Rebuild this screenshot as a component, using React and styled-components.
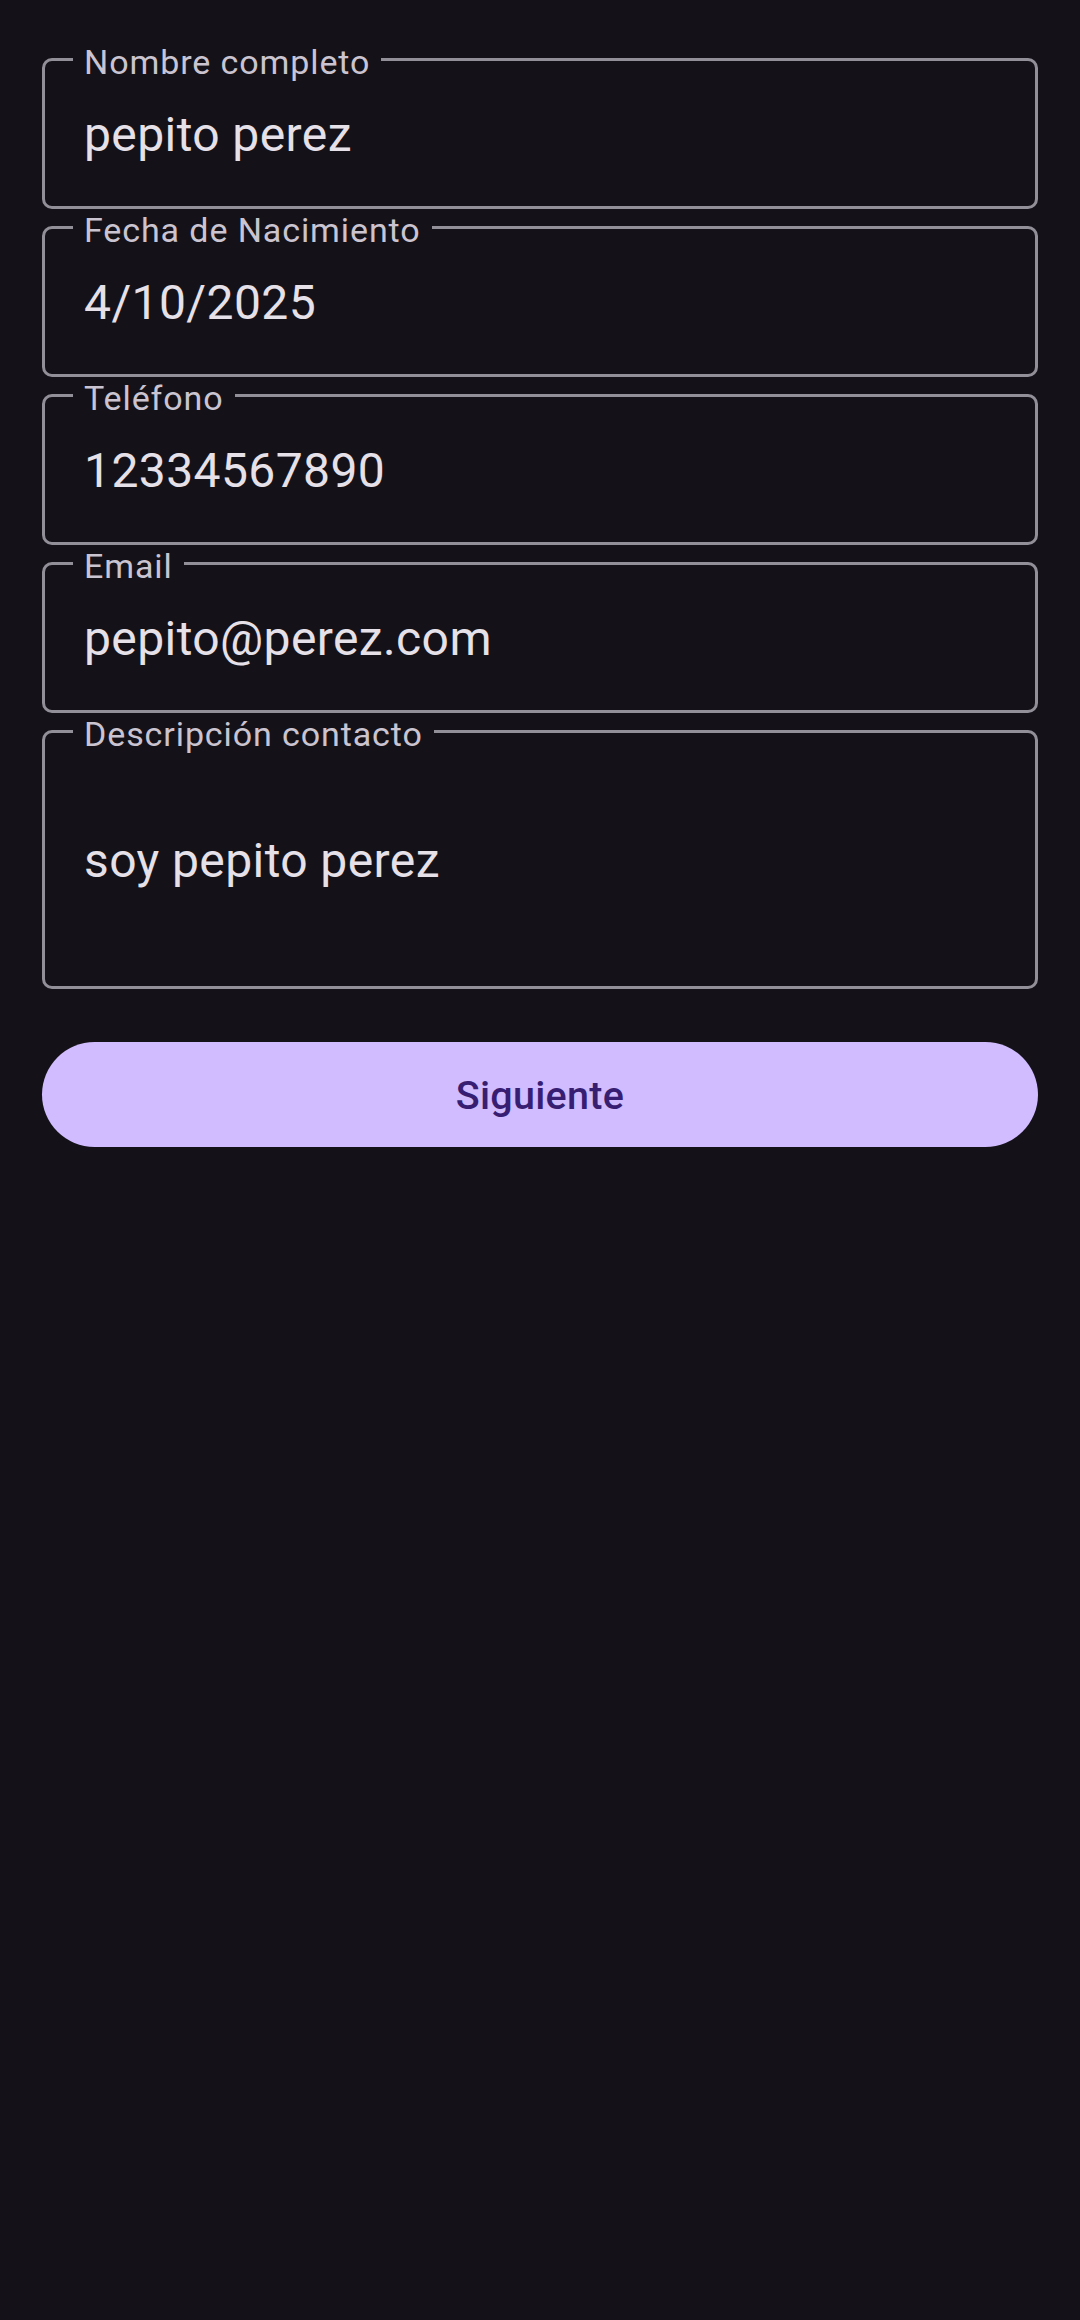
import React from "react";
import styled, { createGlobalStyle } from "styled-components";

const Global = createGlobalStyle`
  html, body {
    margin: 0;
    padding: 0;
    background: #141218;
    min-height: 100%;
  }
  body {
    font-family: Roboto, "Noto Sans", sans-serif;
    -webkit-font-smoothing: antialiased;
  }
  * { box-sizing: border-box; }
`;

const Page = styled.main`
  min-height: 2320px;
  background: #141218;
  padding: 41px 42px 0 42px;
  display: flex;
  flex-direction: column;
`;

const Form = styled.form`
  display: flex;
  flex-direction: column;
`;

const Field = styled.fieldset`
  margin: 0;
  padding: 0;
  border: 3px solid #938f99;
  border-radius: 10px;
  min-width: 0;
`;

const Label = styled.legend`
  margin-left: 28px;
  padding: 6px 11px 0;
  font-family: Roboto, sans-serif;
  font-size: 34px;
  line-height: 30px;
  letter-spacing: 0.9px;
  color: #cac4d0;
`;

const Value = styled.div`
  padding: ${(p) => (p.$tall ? "84px 39px 97px" : "30px 39px 43px")};
  font-family: Roboto, sans-serif;
  font-size: 48px;
  line-height: 56px;
  letter-spacing: 0.4px;
  color: #e6e0e9;
  white-space: nowrap;
`;

const Button = styled.button`
  margin-top: 53px;
  height: 105px;
  width: 100%;
  border: none;
  border-radius: 53px;
  background: #d0bcff;
  color: #381e72;
  font-family: Roboto, sans-serif;
  font-weight: 500;
  font-size: 39.5px;
  letter-spacing: 0.3px;
  display: flex;
  align-items: center;
  justify-content: center;
  padding: 2px 0 0;
`;

const fields = [
  { label: "Nombre completo", value: "pepito perez" },
  { label: "Fecha de Nacimiento", value: "4/10/2025" },
  { label: "Teléfono", value: "12334567890" },
  { label: "Email", value: "pepito@perez.com" },
  { label: "Descripción contacto", value: "soy pepito perez", tall: true },
];

export default function App() {
  return (
    <>
      <Global />
      <Page>
        <Form onSubmit={(e) => e.preventDefault()}>
          {fields.map((f) => (
            <Field key={f.label}>
              <Label>{f.label}</Label>
              <Value $tall={f.tall}>{f.value}</Value>
            </Field>
          ))}
        </Form>
        <Button type="button">Siguiente</Button>
      </Page>
    </>
  );
}
